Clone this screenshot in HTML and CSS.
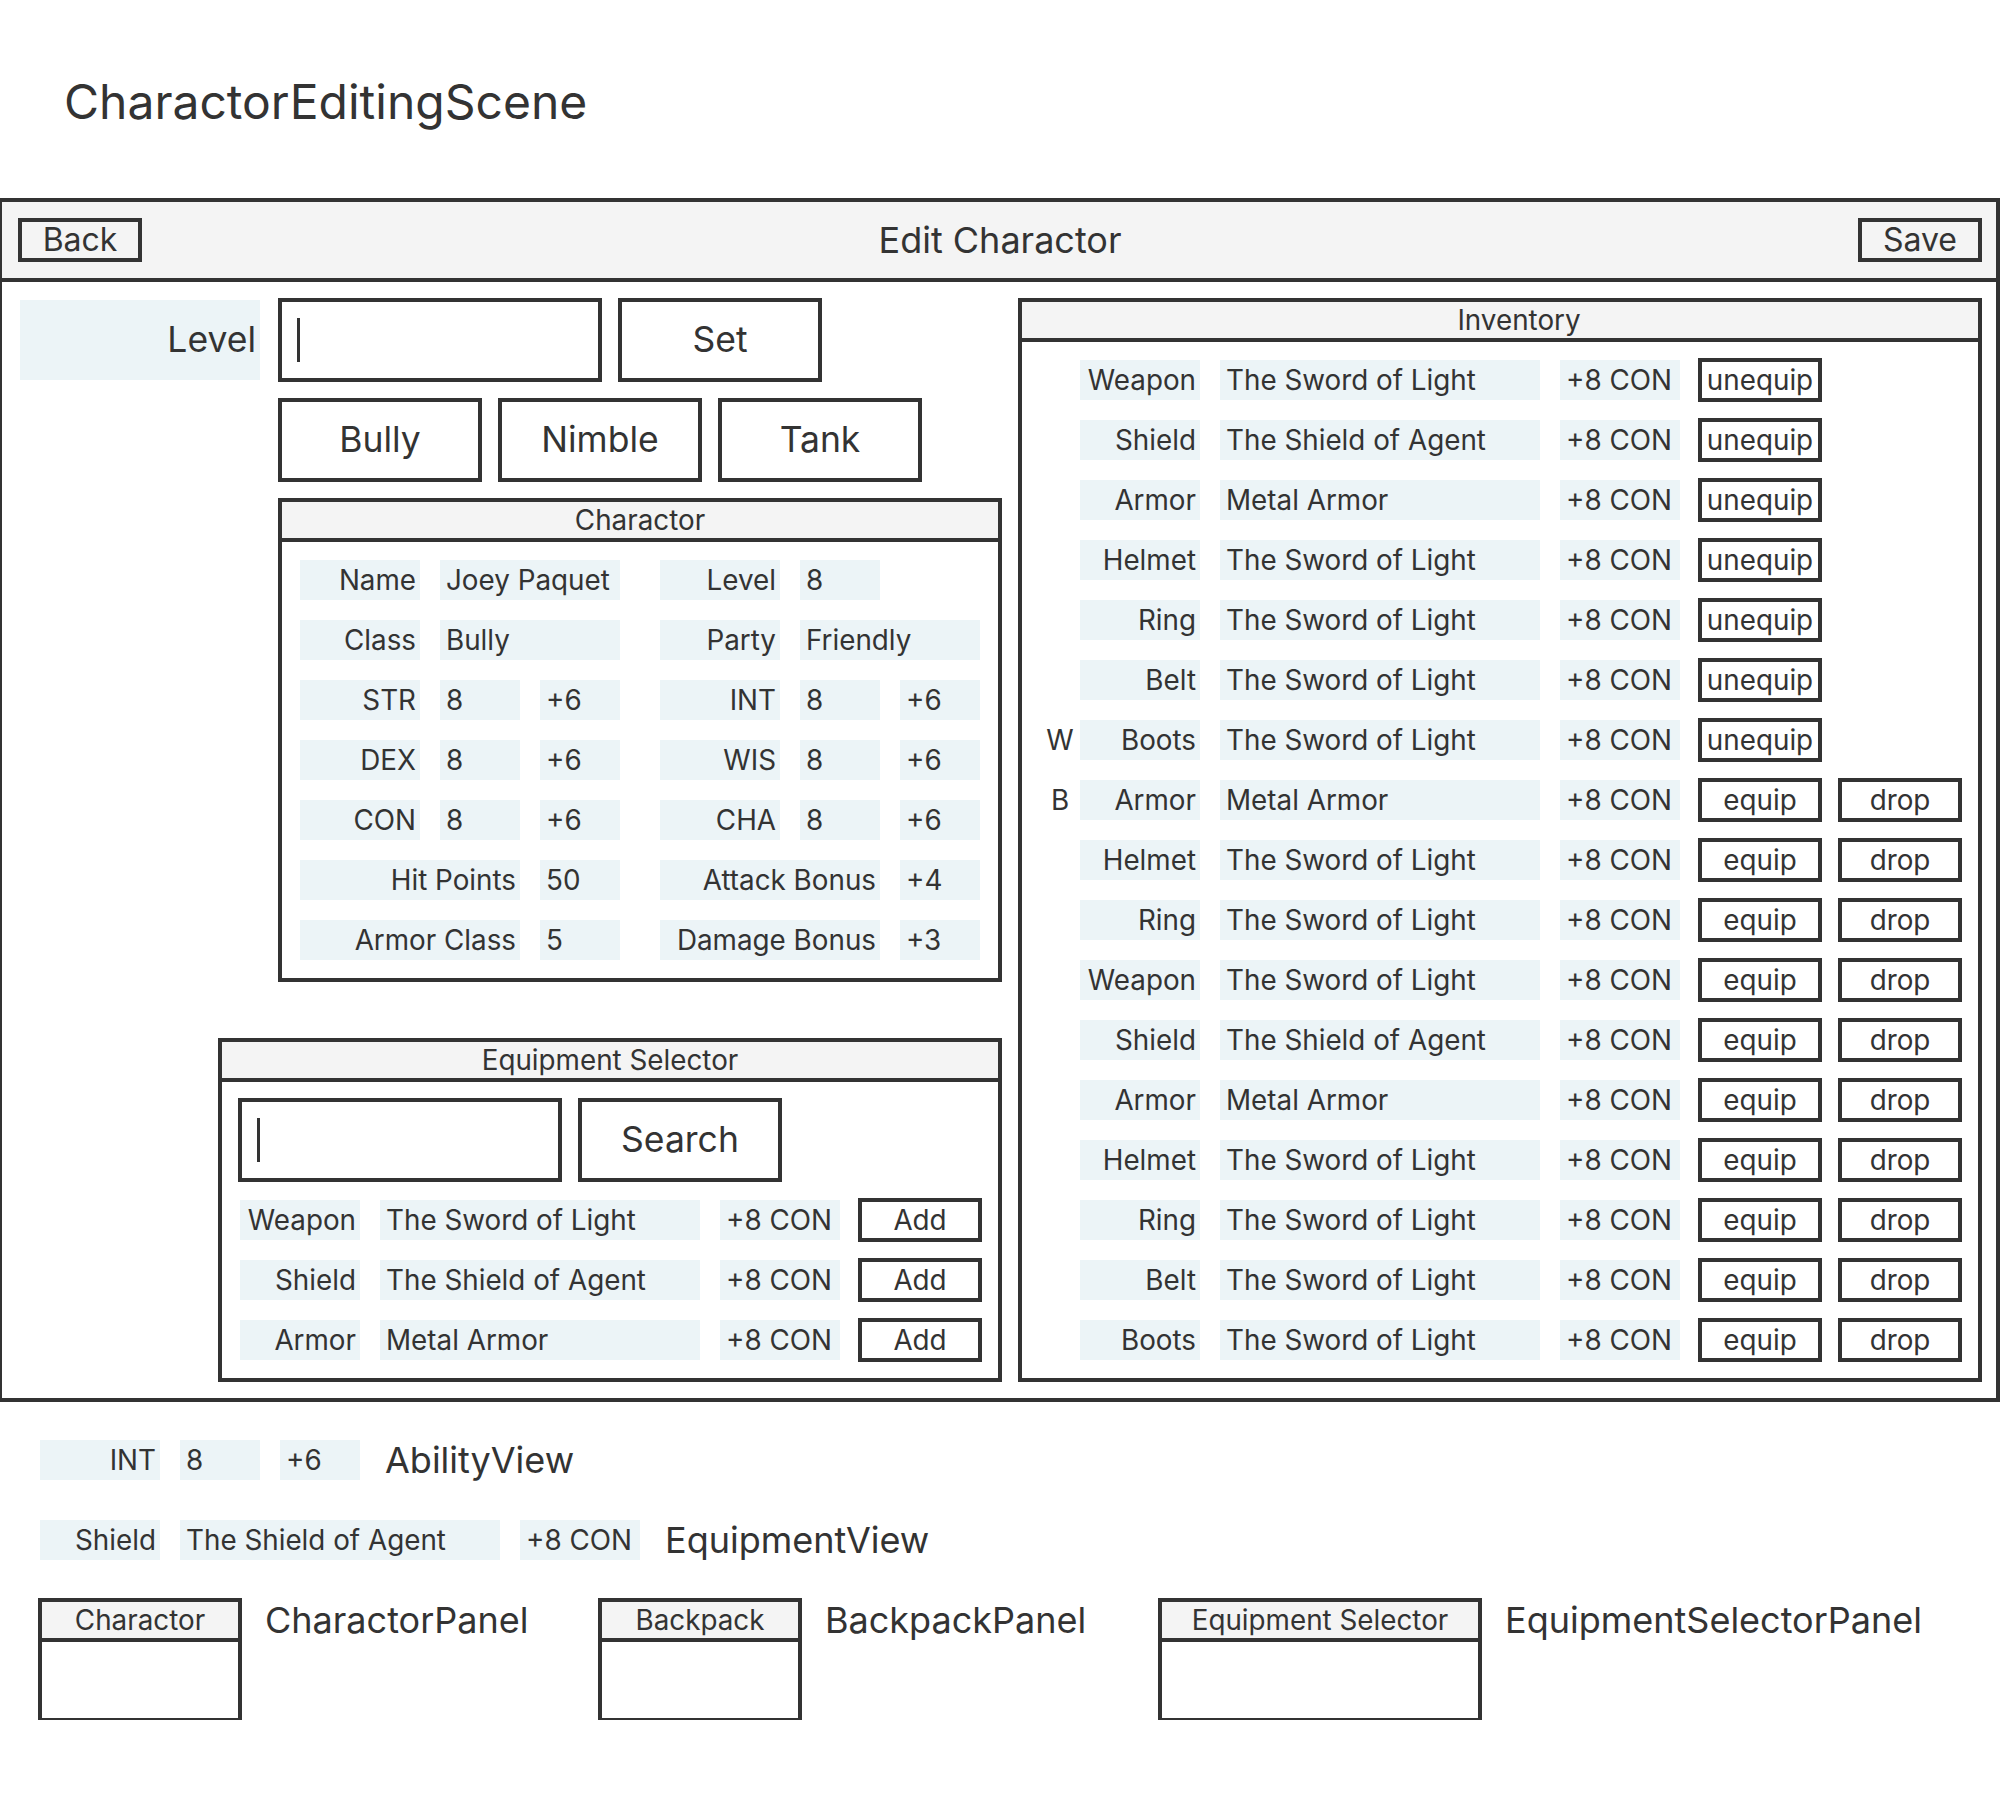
FILE: index.html
```html
<!DOCTYPE html>
<html>
<head>
<meta charset="utf-8">
<title>CharactorEditingScene</title>
<link rel="stylesheet" href="styles.css">
</head>
<body>
<div class="page">
  <h1 class="title">CharactorEditingScene</h1>

  <div class="frame">
    <div class="topbar">
      <div class="tb-left"><div class="btn btn-top">Back</div></div>
      <div class="tb-title">Edit Charactor</div>
      <div class="tb-right"><div class="btn btn-top">Save</div></div>
    </div>

    <div class="body">
      <div class="left">
        <div class="level-row">
          <div class="big-label">Level</div>
          <div class="big-input"><span class="caret"></span></div>
          <div class="btn big-btn">Set</div>
        </div>

        <div class="class-row">
          <div class="btn big-btn">Bully</div>
          <div class="btn big-btn">Nimble</div>
          <div class="btn big-btn">Tank</div>
        </div>

        <section class="panel char-panel">
          <div class="panel-head">Charactor</div>
          <div class="char-grid">
            <div class="c l c1">Name</div><div class="c v s23">Joey Paquet</div>
            <div class="c l c5">Level</div><div class="c v c6">8</div>

            <div class="c l c1">Class</div><div class="c v s23">Bully</div>
            <div class="c l c5">Party</div><div class="c v s67">Friendly</div>

            <div class="c l c1">STR</div><div class="c v c2">8</div><div class="c v c3">+6</div>
            <div class="c l c5">INT</div><div class="c v c6">8</div><div class="c v c7">+6</div>

            <div class="c l c1">DEX</div><div class="c v c2">8</div><div class="c v c3">+6</div>
            <div class="c l c5">WIS</div><div class="c v c6">8</div><div class="c v c7">+6</div>

            <div class="c l c1">CON</div><div class="c v c2">8</div><div class="c v c3">+6</div>
            <div class="c l c5">CHA</div><div class="c v c6">8</div><div class="c v c7">+6</div>

            <div class="c l s12">Hit Points</div><div class="c v c3">50</div>
            <div class="c l s56">Attack Bonus</div><div class="c v c7">+4</div>

            <div class="c l s12">Armor Class</div><div class="c v c3">5</div>
            <div class="c l s56">Damage Bonus</div><div class="c v c7">+3</div>
          </div>
        </section>

        <section class="panel eq-panel">
          <div class="panel-head">Equipment Selector</div>
          <div class="eq-body">
            <div class="search-row">
              <div class="big-input"><span class="caret"></span></div>
              <div class="btn big-btn">Search</div>
            </div>
            <div class="item-row">
              <div class="c l w120">Weapon</div><div class="c v w320">The Sword of Light</div><div class="c v w120">+8 CON</div><div class="btn sbtn">Add</div>
            </div>
            <div class="item-row">
              <div class="c l w120">Shield</div><div class="c v w320">The Shield of Agent</div><div class="c v w120">+8 CON</div><div class="btn sbtn">Add</div>
            </div>
            <div class="item-row">
              <div class="c l w120">Armor</div><div class="c v w320">Metal Armor</div><div class="c v w120">+8 CON</div><div class="btn sbtn">Add</div>
            </div>
          </div>
        </section>
      </div>

      <section class="panel inv-panel">
        <div class="panel-head inv-head">Inventory</div>
        <div class="inv-body">
          <div class="item-row"><div class="mark"></div><div class="c l w120">Weapon</div><div class="c v w320">The Sword of Light</div><div class="c v w120">+8 CON</div><div class="btn sbtn">unequip</div></div>
          <div class="item-row"><div class="mark"></div><div class="c l w120">Shield</div><div class="c v w320">The Shield of Agent</div><div class="c v w120">+8 CON</div><div class="btn sbtn">unequip</div></div>
          <div class="item-row"><div class="mark"></div><div class="c l w120">Armor</div><div class="c v w320">Metal Armor</div><div class="c v w120">+8 CON</div><div class="btn sbtn">unequip</div></div>
          <div class="item-row"><div class="mark"></div><div class="c l w120">Helmet</div><div class="c v w320">The Sword of Light</div><div class="c v w120">+8 CON</div><div class="btn sbtn">unequip</div></div>
          <div class="item-row"><div class="mark"></div><div class="c l w120">Ring</div><div class="c v w320">The Sword of Light</div><div class="c v w120">+8 CON</div><div class="btn sbtn">unequip</div></div>
          <div class="item-row"><div class="mark"></div><div class="c l w120">Belt</div><div class="c v w320">The Sword of Light</div><div class="c v w120">+8 CON</div><div class="btn sbtn">unequip</div></div>
          <div class="item-row"><div class="mark">W</div><div class="c l w120">Boots</div><div class="c v w320">The Sword of Light</div><div class="c v w120">+8 CON</div><div class="btn sbtn">unequip</div></div>
          <div class="item-row"><div class="mark">B</div><div class="c l w120">Armor</div><div class="c v w320">Metal Armor</div><div class="c v w120">+8 CON</div><div class="btn sbtn">equip</div><div class="btn sbtn">drop</div></div>
          <div class="item-row"><div class="mark"></div><div class="c l w120">Helmet</div><div class="c v w320">The Sword of Light</div><div class="c v w120">+8 CON</div><div class="btn sbtn">equip</div><div class="btn sbtn">drop</div></div>
          <div class="item-row"><div class="mark"></div><div class="c l w120">Ring</div><div class="c v w320">The Sword of Light</div><div class="c v w120">+8 CON</div><div class="btn sbtn">equip</div><div class="btn sbtn">drop</div></div>
          <div class="item-row"><div class="mark"></div><div class="c l w120">Weapon</div><div class="c v w320">The Sword of Light</div><div class="c v w120">+8 CON</div><div class="btn sbtn">equip</div><div class="btn sbtn">drop</div></div>
          <div class="item-row"><div class="mark"></div><div class="c l w120">Shield</div><div class="c v w320">The Shield of Agent</div><div class="c v w120">+8 CON</div><div class="btn sbtn">equip</div><div class="btn sbtn">drop</div></div>
          <div class="item-row"><div class="mark"></div><div class="c l w120">Armor</div><div class="c v w320">Metal Armor</div><div class="c v w120">+8 CON</div><div class="btn sbtn">equip</div><div class="btn sbtn">drop</div></div>
          <div class="item-row"><div class="mark"></div><div class="c l w120">Helmet</div><div class="c v w320">The Sword of Light</div><div class="c v w120">+8 CON</div><div class="btn sbtn">equip</div><div class="btn sbtn">drop</div></div>
          <div class="item-row"><div class="mark"></div><div class="c l w120">Ring</div><div class="c v w320">The Sword of Light</div><div class="c v w120">+8 CON</div><div class="btn sbtn">equip</div><div class="btn sbtn">drop</div></div>
          <div class="item-row"><div class="mark"></div><div class="c l w120">Belt</div><div class="c v w320">The Sword of Light</div><div class="c v w120">+8 CON</div><div class="btn sbtn">equip</div><div class="btn sbtn">drop</div></div>
          <div class="item-row"><div class="mark"></div><div class="c l w120">Boots</div><div class="c v w320">The Sword of Light</div><div class="c v w120">+8 CON</div><div class="btn sbtn">equip</div><div class="btn sbtn">drop</div></div>
        </div>
      </section>
    </div>
  </div>

  <div class="legend">
    <div class="legend-row">
      <div class="c l w120">INT</div><div class="c v w80">8</div><div class="c v w80">+6</div>
      <div class="legend-label">AbilityView</div>
    </div>
    <div class="legend-row">
      <div class="c l w120">Shield</div><div class="c v w320">The Shield of Agent</div><div class="c v w120">+8 CON</div>
      <div class="legend-label">EquipmentView</div>
    </div>
    <div class="legend-panels">
      <div class="legend-group">
        <section class="panel mini-panel"><div class="panel-head">Charactor</div></section>
        <div class="legend-label">CharactorPanel</div>
      </div>
      <div class="legend-group">
        <section class="panel mini-panel"><div class="panel-head">Backpack</div></section>
        <div class="legend-label">BackpackPanel</div>
      </div>
      <div class="legend-group">
        <section class="panel mini-panel wide"><div class="panel-head">Equipment Selector</div></section>
        <div class="legend-label">EquipmentSelectorPanel</div>
      </div>
    </div>
  </div>
</div>
</body>
</html>
```

FILE: styles.css
```css
* { box-sizing: border-box; }

body {
  margin: 0;
  background: #ffffff;
  color: #333333;
  font-family: Inter, "Noto Sans", "Liberation Sans", sans-serif;
  font-weight: 400;
}

.page { width: 2000px; }

.title {
  margin: 0;
  height: 198px;
  padding: 72px 0 0 64px;
  font-size: 48px;
  font-weight: 400;
  line-height: 60px;
}

/* main frame */
.frame {
  margin-left: -2px;
  width: 2002px;
  height: 1204px;
  border: 4px solid #333;
  display: flex;
  flex-direction: column;
}

.topbar {
  height: 80px;
  flex: none;
  background: #f4f4f4;
  border-bottom: 4px solid #333;
  display: grid;
  grid-template-columns: 1fr auto 1fr;
  align-items: center;
  padding: 0 14px 0 16px;
}
.tb-title { font-size: 36px; line-height: 40px; }
.tb-right { justify-self: end; }

.btn {
  border: 4px solid #333;
  background: #fff;
  text-align: center;
  white-space: nowrap;
}
.btn-top {
  width: 124px;
  height: 44px;
  font-size: 32px;
  line-height: 36px;
  background: transparent;
}

.body {
  flex: 1;
  display: flex;
  gap: 20px;
  padding: 18px 16px 18px 18px;
}

.left {
  width: 980px;
  display: flex;
  flex-direction: column;
  gap: 20px;
}

.level-row, .class-row, .search-row {
  display: flex;
  gap: 20px;
  height: 80px;
  align-items: center;
}
.class-row { margin-left: 260px; }

.big-label {
  width: 240px;
  height: 80px;
  background: #ecf4f7;
  text-align: right;
  padding-right: 4px;
  font-size: 35.5px;
  line-height: 80px;
}

.big-input {
  width: 324px;
  height: 84px;
  margin: -2px;
  border: 4px solid #333;
  display: flex;
  align-items: center;
  padding-left: 15px;
}
.caret {
  width: 3px;
  height: 44px;
  background: #333;
}

.big-btn {
  width: 204px;
  height: 84px;
  margin: -2px;
  font-size: 35.5px;
  line-height: 76px;
}

/* panels */
.panel {
  border: 4px solid #333;
  background: #fff;
  display: flex;
  flex-direction: column;
}
.panel-head {
  height: 40px;
  flex: none;
  background: #f4f4f4;
  border-bottom: 4px solid #333;
  text-align: center;
  font-size: 27.8px;
  line-height: 36px;
  white-space: nowrap;
}
.inv-head { padding-left: 38px; }

.char-panel {
  width: 724px;
  height: 484px;
  margin: -2px -2px -2px 258px;
}
.char-grid {
  padding: 18px;
  display: grid;
  grid-template-columns: 120px 80px 80px 0 120px 80px 80px;
  grid-auto-rows: 40px;
  column-gap: 20px;
  row-gap: 20px;
}
.c1 { grid-column: 1; }
.c2 { grid-column: 2; }
.c3 { grid-column: 3; }
.c5 { grid-column: 5; }
.c6 { grid-column: 6; }
.c7 { grid-column: 7; }
.s12 { grid-column: 1 / 3; }
.s23 { grid-column: 2 / 4; }
.s56 { grid-column: 5 / 7; }
.s67 { grid-column: 6 / 8; }

.c {
  height: 40px;
  background: #ecf4f7;
  font-size: 27.8px;
  line-height: 40px;
  white-space: nowrap;
  flex: none;
}
.l { text-align: right; padding-right: 4px; }
.v { text-align: left; padding-left: 6px; }
.w80 { width: 80px; }
.w120 { width: 120px; }
.w320 { width: 320px; }

.eq-panel {
  width: 784px;
  height: 344px;
  margin: 38px -2px -2px 198px;
}
.eq-body, .inv-body {
  padding: 18px;
  display: flex;
  flex-direction: column;
  gap: 20px;
}

.item-row {
  display: flex;
  gap: 20px;
  height: 40px;
  align-items: center;
}
.sbtn {
  width: 124px;
  height: 44px;
  margin: -2px;
  font-size: 27.8px;
  line-height: 36px;
  flex: none;
}

.inv-panel {
  width: 964px;
  height: 1084px;
  margin: -2px;
}
.mark {
  width: 40px;
  margin-right: -20px;
  text-align: center;
  font-size: 27.8px;
  line-height: 40px;
  flex: none;
}

/* legend below the frame */
.legend {
  padding: 38px 0 0 40px;
  display: flex;
  flex-direction: column;
  gap: 40px;
}
.legend-row {
  display: flex;
  gap: 20px;
  height: 40px;
  align-items: center;
}
.legend-label {
  margin-left: 5px;
  font-size: 36px;
  line-height: 40px;
  white-space: nowrap;
}
.legend-panels {
  display: grid;
  grid-template-columns: 540px 540px 540px;
  column-gap: 20px;
  height: 120px;
}
.legend-group {
  display: flex;
  gap: 20px;
  align-items: flex-start;
}
.mini-panel {
  width: 204px;
  height: 124px;
  margin: -2px;
  flex: none;
}
.mini-panel.wide { width: 324px; }
```
